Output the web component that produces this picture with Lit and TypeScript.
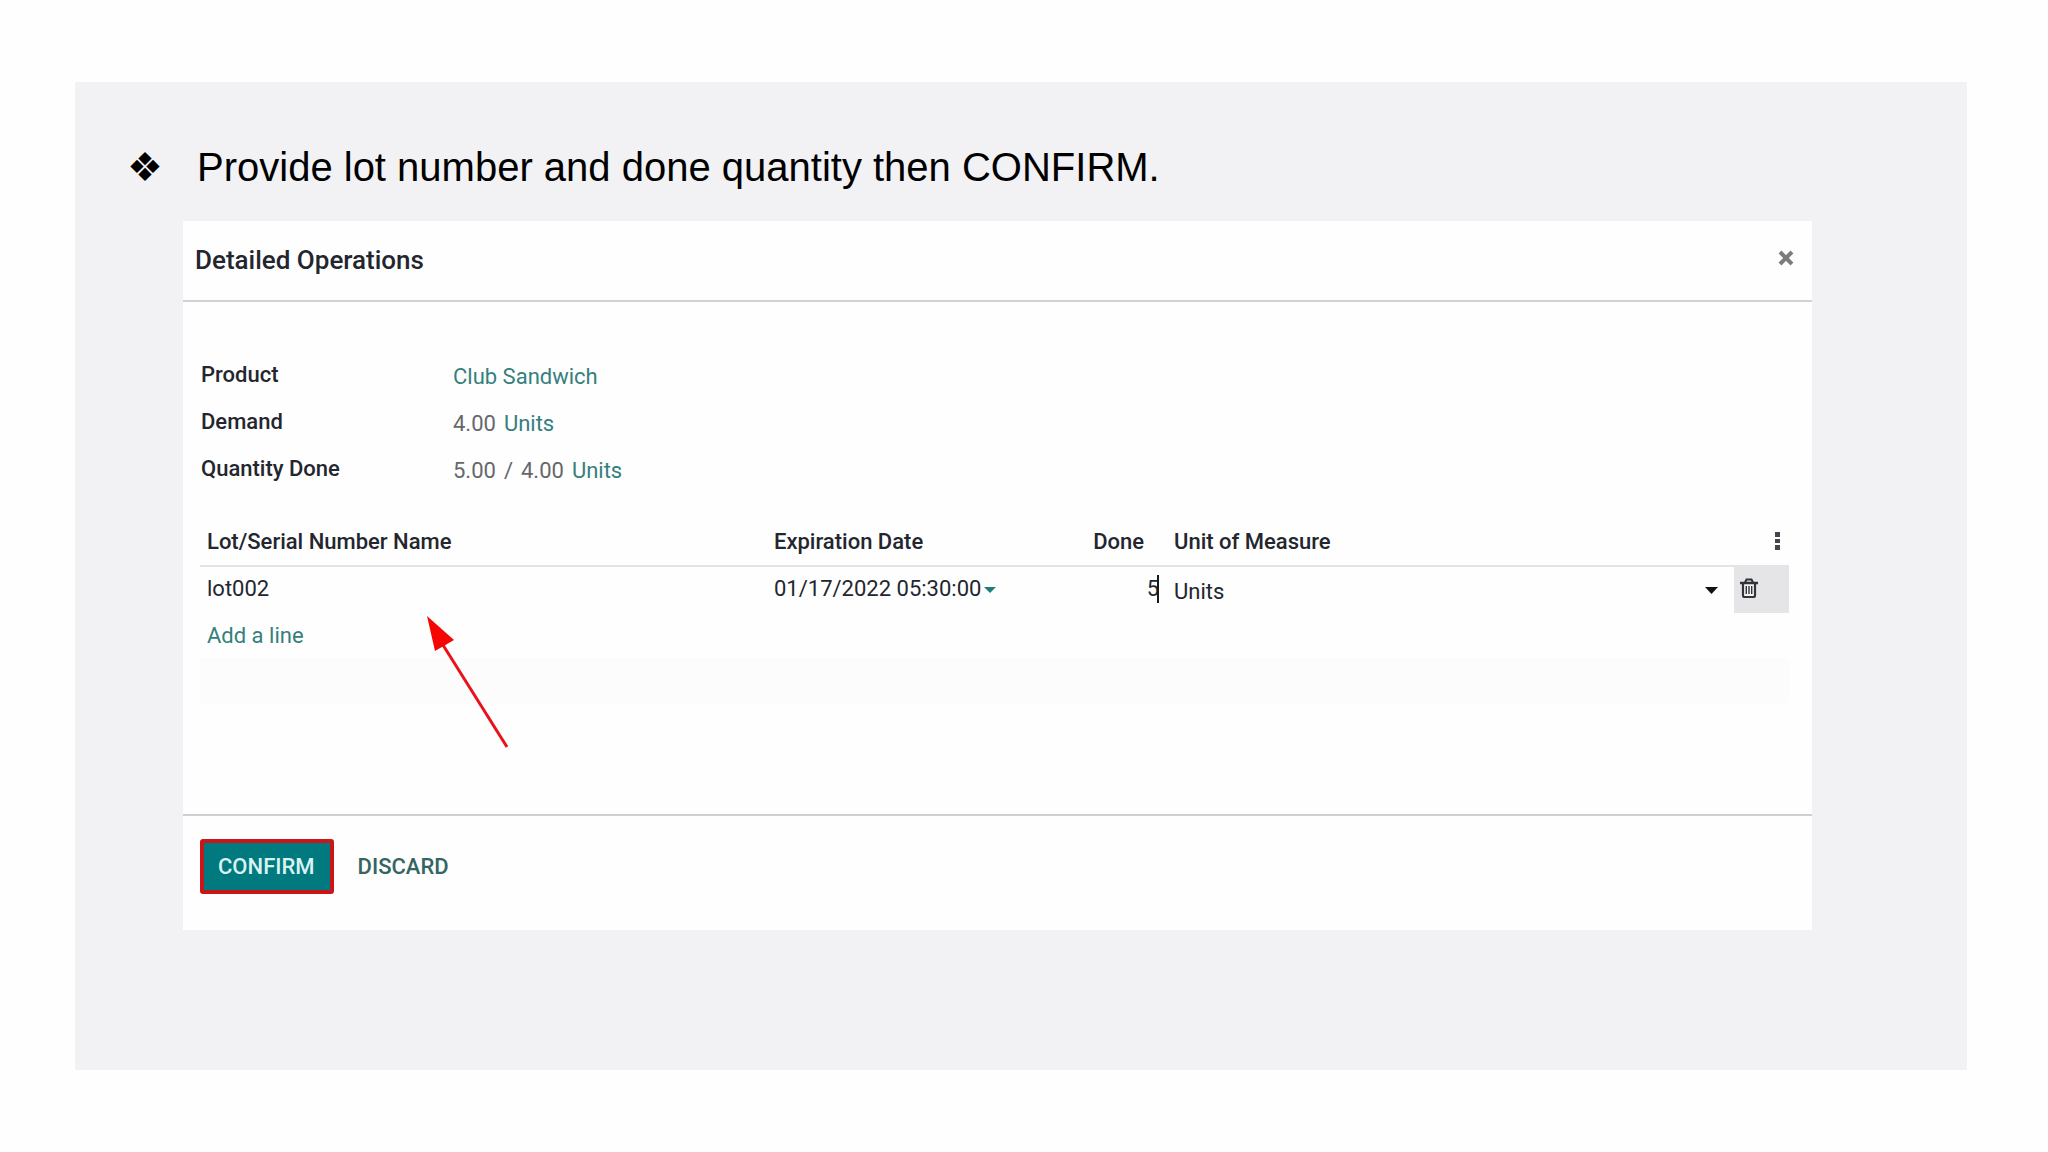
import { LitElement, html, css } from "lit";
import { customElement, state } from "lit/decorators.js";

@customElement("operations-dialog")
export class OperationsDialog extends LitElement {
  static styles = css`
    :host {
      display: block;
      position: relative;
      background: #fefefe;
      color: #23262e;
      font-family: Roboto, "Liberation Sans", sans-serif;
      font-size: 22px;
      line-height: 24px;
    }
    button,
    input,
    select {
      font: inherit;
      color: inherit;
      background: none;
      border: 0;
      border-radius: 0;
      margin: 0;
      padding: 0;
      outline: none;
      appearance: none;
    }
    button,
    select {
      cursor: pointer;
    }
    svg {
      display: block;
    }
    a {
      color: #35807c;
      text-decoration: none;
    }
    .header {
      display: flex;
      align-items: flex-start;
      justify-content: space-between;
      padding: 21px 16px 22px 12px;
      border-bottom: 2px solid #d2d2d3;
    }
    .title {
      margin: 0;
      font-size: 26px;
      line-height: 36px;
      font-weight: 500;
    }
    .close {
      padding-top: 6px;
    }
    .body {
      padding: 61px 23px 111px 17px;
    }
    .fields {
      display: grid;
      grid-template-columns: 252px 1fr;
      row-gap: 21px;
      margin: 0;
      padding-left: 1px;
    }
    .label {
      font-weight: 500;
    }
    .value {
      display: flex;
      gap: 8px;
      margin: 0;
      padding-top: 2px;
      line-height: 24px;
      color: #66676b;
    }
    .lines {
      width: 100%;
      margin-top: 35px;
      table-layout: fixed;
      border-collapse: collapse;
    }
    .lines th,
    .lines td {
      height: 45px;
      padding: 0 8px 0 7px;
      text-align: left;
      vertical-align: top;
      box-sizing: border-box;
    }
    .lines th {
      height: 48px;
      padding-top: 12px;
      font-weight: 500;
      border-bottom: 2px solid #e4e4e7;
    }
    .lines td {
      padding-top: 11px;
    }
    .date {
      width: 300px;
    }
    .done {
      width: 100px;
    }
    .unit {
      width: 567px;
    }
    .tools {
      width: 55px;
    }
    .lines th.done {
      padding-right: 23px;
      text-align: right;
    }
    .lines .row td {
      height: 47px;
      padding-top: 10px;
    }
    .lines .row .trash {
      padding: 0;
      background: #e5e4e6;
    }
    .blank {
      background: #fdfcfd;
    }
    .field {
      display: flex;
      align-items: center;
    }
    .name-input {
      width: 100%;
    }
    .date-input {
      width: 210px;
    }
    .done-input {
      flex: 1;
      min-width: 0;
      text-align: right;
    }
    .caret {
      width: 2px;
      height: 28px;
      margin: -2px 0 -2px -2px;
      background: #17181c;
    }
    .unit-field {
      padding-top: 3px;
      padding-right: 8px;
    }
    .unit-select {
      flex: 1;
    }
    .unit-arrow {
      margin-bottom: 4px;
    }
    .kebab {
      display: block;
      margin-left: auto;
    }
    .trash-button {
      display: block;
      padding: 11px 6px;
    }
    .footer {
      display: flex;
      gap: 24px;
      padding: 23px 17px 36px;
      border-top: 2px solid #cfced2;
    }
    .action {
      height: 55px;
      padding-top: 1px;
      font-weight: 500;
    }
    .confirm {
      padding-left: 14px;
      padding-right: 15px;
      color: #d9f3f2;
      background: #00797f;
      border: 4px solid #c8161a;
      border-radius: 3px;
    }
    .discard {
      color: #346563;
    }
    .pointer {
      position: absolute;
      left: 240px;
      top: 391px;
      pointer-events: none;
    }
  `;

  @state() private lot = "lot002";
  @state() private done = "5";

  render() {
    return html`
      <header class="header">
        <h2 class="title">Detailed Operations</h2>
        <button class="close" type="button" aria-label="Close">
          <svg width="20" height="20" viewBox="0 0 20 20">
            <path d="M4 4L16 16M16 4L4 16" stroke="#7c7c7e" stroke-width="4" />
          </svg>
        </button>
      </header>
      <div class="body">
        <dl class="fields">
          <dt class="label">Product</dt>
          <dd class="value"><a href="#product">Club Sandwich</a></dd>
          <dt class="label">Demand</dt>
          <dd class="value"><span>4.00</span><a href="#units">Units</a></dd>
          <dt class="label">Quantity Done</dt>
          <dd class="value">
            <span>5.00</span><span>/</span><span>4.00</span><a href="#units">Units</a>
          </dd>
        </dl>
        <table class="lines">
          <thead>
            <tr>
              <th id="lot-head">Lot/Serial Number Name</th>
              <th class="date" id="date-head">Expiration Date</th>
              <th class="done" id="done-head">Done</th>
              <th class="unit" id="unit-head">Unit of Measure</th>
              <th class="tools">
                <button class="kebab" type="button" aria-label="Optional columns">
                  <svg width="7" height="24" viewBox="0 0 7 24">
                    <path d="M1 2h5v5h-5z M1 9h5v4h-5z M1 15h5v5h-5z" fill="#45454b" />
                  </svg>
                </button>
              </th>
            </tr>
          </thead>
          <tbody>
            <tr class="row">
              <td>
                <div class="field">
                  <input class="name-input" aria-labelledby="lot-head" .value=${this.lot} />
                </div>
              </td>
              <td>
                <div class="field">
                  <input class="date-input" aria-labelledby="date-head" value="01/17/2022 05:30:00" />
                  <svg width="12" height="7" viewBox="0 0 12 7">
                    <path d="M0 1h12L6 7z" fill="#1f7f78" />
                  </svg>
                </div>
              </td>
              <td>
                <div class="field">
                  <input class="done-input" aria-labelledby="done-head" .value=${this.done} />
                  <span class="caret"></span>
                </div>
              </td>
              <td>
                <div class="field unit-field">
                  <select class="unit-select" aria-labelledby="unit-head">
                    <option>Units</option>
                  </select>
                  <svg class="unit-arrow" width="13" height="7" viewBox="0 0 13 7">
                    <path d="M0 0h13L6.5 7z" fill="#111" />
                  </svg>
                </div>
              </td>
              <td class="trash">
                <button class="trash-button" type="button" aria-label="Delete row">
                  <svg width="18" height="20" viewBox="0 0 18 20" fill="none" stroke="#30333a">
                    <path d="M3 5h12v14H3z" fill="#f2f3f5" stroke="none" />
                    <path d="M0 5h18" stroke-width="2.5" />
                    <path d="M5 4.5L6.5 1.5h5L13 4.5" stroke-width="2" />
                    <path d="M3 5v12.500q0 1.500 1.500 1.500h9q1.500 0 1.500-1.500V5" stroke-width="2.2" />
                    <path d="M6.300 8v8M9 8v8M11.700 8v8" stroke-width="1.400" />
                  </svg>
                </button>
              </td>
            </tr>
            <tr>
              <td colspan="5"><a href="#add">Add a line</a></td>
            </tr>
            <tr class="blank">
              <td colspan="5"></td>
            </tr>
          </tbody>
        </table>
      </div>
      <footer class="footer">
        <button class="action confirm" type="button">CONFIRM</button>
        <button class="action discard" type="button">DISCARD</button>
      </footer>
      <svg class="pointer" width="90" height="140" viewBox="0 0 90 140" aria-hidden="true">
        <path d="M20 33L84 135" stroke="#e8121c" stroke-width="3" />
        <path d="M4 4L31 28L12 39z" fill="#f60505" />
      </svg>
    `;
  }
}

@customElement("app-root")
export class AppRoot extends LitElement {
  static styles = css`
    :host {
      display: block;
      box-sizing: border-box;
      min-height: 100vh;
      padding: 82px 81px 83px 75px;
      background: #fefefe;
    }
    .slide {
      padding: 62px 155px 140px 52px;
      background: #f2f1f3;
    }
    .points {
      margin: 0 0 31px;
      padding: 0;
      list-style: none;
    }
    .point {
      display: flex;
      align-items: center;
      color: #000;
      font-family: "Liberation Sans", Arial, sans-serif;
      font-size: 40px;
      line-height: 46px;
    }
    .bullet {
      width: 70px;
      font-family: "DejaVu Sans", sans-serif;
    }
    .dialog {
      margin-left: 56px;
    }
  `;

  render() {
    return html`
      <main class="slide">
        <ul class="points">
          <li class="point">
            <span class="bullet">❖</span>
            <span>Provide lot number and done quantity then CONFIRM.</span>
          </li>
        </ul>
        <operations-dialog class="dialog"></operations-dialog>
      </main>
    `;
  }
}
